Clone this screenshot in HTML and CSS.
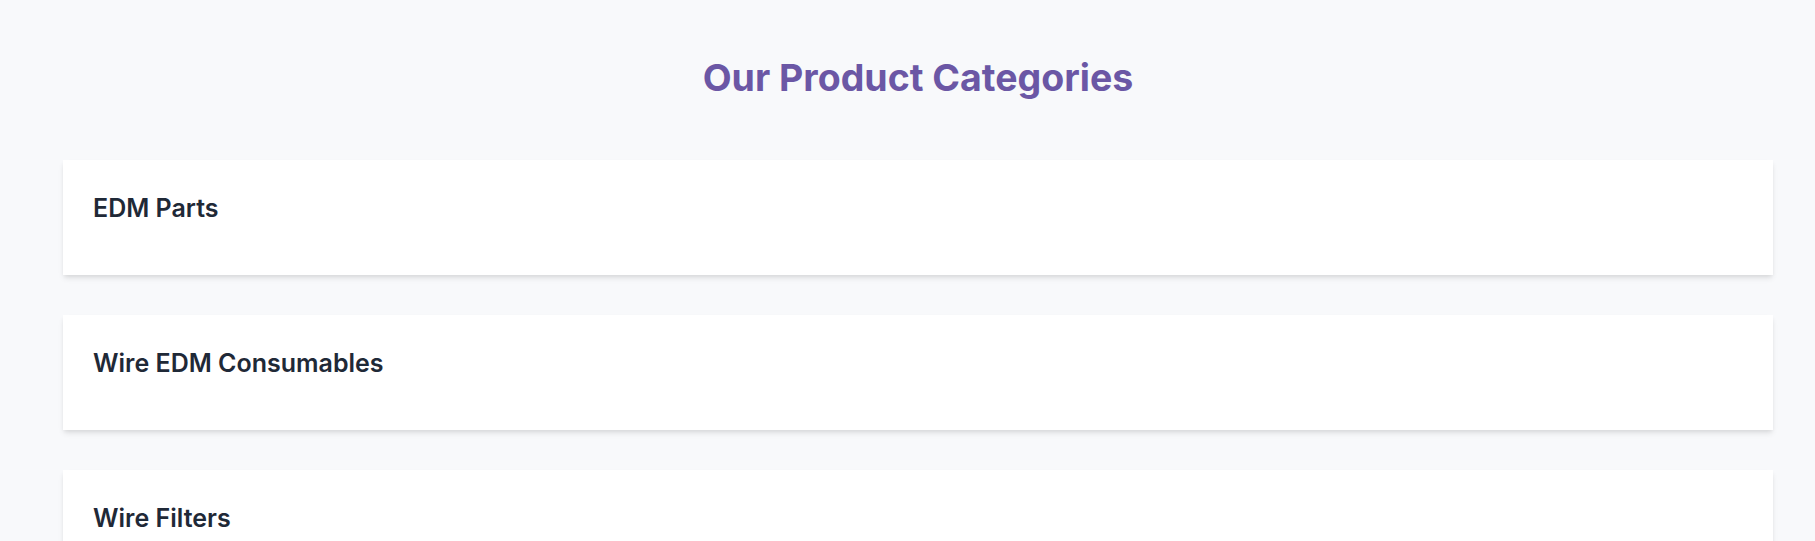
FILE: index.html
```html
<!DOCTYPE html>
<html lang="en">
<head>
<meta charset="utf-8">
<title>Our Product Categories</title>
<link rel="stylesheet" href="styles.css">
</head>
<body>
<section class="categories">
  <h2 class="categories-title">Our Product Categories</h2>
  <div class="category-list">
    <div class="category-card"><h3 class="category-name">EDM Parts</h3></div>
    <div class="category-card"><h3 class="category-name">Wire EDM Consumables</h3></div>
    <div class="category-card"><h3 class="category-name">Wire Filters</h3></div>
  </div>
</section>
</body>
</html>
```

FILE: styles.css
```css
html, body {
  margin: 0;
  padding: 0;
}
body {
  background: #f8f9fb;
  font-family: Inter, "Noto Sans", sans-serif;
  color: #1f2937;
}
.categories {
  padding: 57px 42px 40px 63px;
}
.categories-title {
  margin: 0 0 62px;
  text-align: center;
  font-size: 37.5px;
  line-height: 41px;
  font-weight: 700;
  color: #6b57a5;
}
.category-list {
  display: flex;
  flex-direction: column;
  gap: 40px;
}
.category-card {
  background: #ffffff;
  box-sizing: border-box;
  min-height: 115px;
  padding: 32px 30px 30px;
  box-shadow: 0 4px 6px -1px rgba(0,0,0,0.1), 0 2px 4px -1px rgba(0,0,0,0.06);
}
.category-name {
  margin: 0;
  font-size: 25px;
  line-height: 32px;
  font-weight: 600;
  color: #1f2937;
}
```
